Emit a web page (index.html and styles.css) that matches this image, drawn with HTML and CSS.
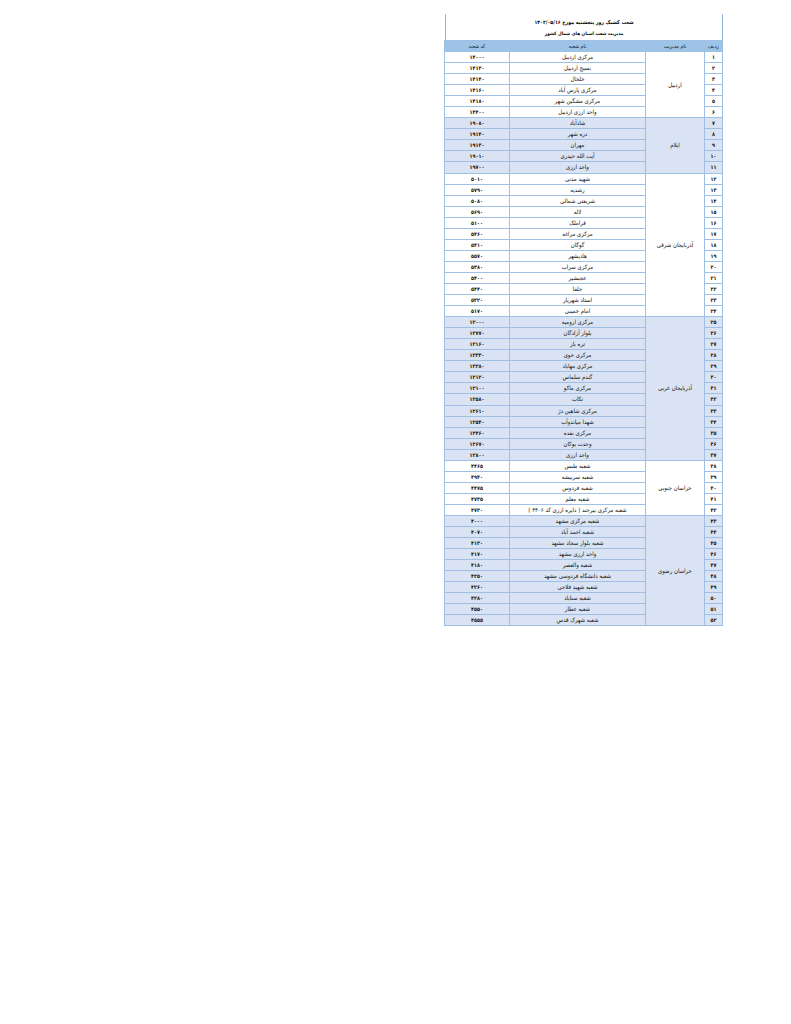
FILE: index.html
```html
<!DOCTYPE html>
<html lang="fa" dir="rtl">
<head>
<meta charset="utf-8">
<title>شعب کشیک</title>
<link rel="stylesheet" href="styles.css">
</head>
<body>
<div class="page">
  <div class="sheet">
    <div class="titles">
      <div class="title">شعب کشیک روز پنجشنبه مورخ ۱۴۰۲/۰۵/۱۶</div>
      <div class="subtitle">مدیریت شعب استان های شمال کشور</div>
    </div>
    <table class="grid">
      <colgroup>
        <col class="c-num"><col class="c-mgmt"><col class="c-name"><col class="c-code">
      </colgroup>
      <thead>
        <tr><th>ردیف</th><th>نام مدیریت</th><th>نام شعبه</th><th>کد شعبه</th></tr>
      </thead>
      <tbody class="g-white">
        <tr><td class="num">۱</td><td class="mgmt" rowspan="6">اردبیل</td><td>مرکزی اردبیل</td><td class="code">۱۴۰۰۰</td></tr>
        <tr><td class="num">۲</td><td>بسیج اردبیل</td><td class="code">۱۴۱۳۰</td></tr>
        <tr><td class="num">۳</td><td>خلخال</td><td class="code">۱۴۱۴۰</td></tr>
        <tr><td class="num">۴</td><td>مرکزی پارس آباد</td><td class="code">۱۴۱۶۰</td></tr>
        <tr><td class="num">۵</td><td>مرکزی مشگین شهر</td><td class="code">۱۴۱۸۰</td></tr>
        <tr><td class="num">۶</td><td>واحد ارزی اردبیل</td><td class="code">۱۴۴۰۰</td></tr>
      </tbody>
      <tbody class="g-band">
        <tr><td class="num">۷</td><td class="mgmt" rowspan="5">ایلام</td><td>شادآباد</td><td class="code">۱۹۰۸۰</td></tr>
        <tr><td class="num">۸</td><td>دره شهر</td><td class="code">۱۹۱۴۰</td></tr>
        <tr><td class="num">۹</td><td>مهران</td><td class="code">۱۹۱۳۰</td></tr>
        <tr><td class="num">۱۰</td><td>آیت الله حیدری</td><td class="code">۱۹۰۱۰</td></tr>
        <tr><td class="num">۱۱</td><td>واحد ارزی</td><td class="code">۱۹۷۰۰</td></tr>
      </tbody>
      <tbody class="g-white">
        <tr><td class="num">۱۲</td><td class="mgmt" rowspan="13">آذربایجان شرقی</td><td>شهید مدنی</td><td class="code">۵۰۱۰</td></tr>
        <tr><td class="num">۱۳</td><td>رشدیه</td><td class="code">۵۷۹۰</td></tr>
        <tr><td class="num">۱۴</td><td>شریعتی شمالی</td><td class="code">۵۰۸۰</td></tr>
        <tr><td class="num">۱۵</td><td>لاله</td><td class="code">۵۶۹۰</td></tr>
        <tr><td class="num">۱۶</td><td>قراملک</td><td class="code">۵۱۰۰</td></tr>
        <tr><td class="num">۱۷</td><td>مرکزی مراغه</td><td class="code">۵۴۶۰</td></tr>
        <tr><td class="num">۱۸</td><td>گوگان</td><td class="code">۵۴۱۰</td></tr>
        <tr><td class="num">۱۹</td><td>هادیشهر</td><td class="code">۵۵۷۰</td></tr>
        <tr><td class="num">۲۰</td><td>مرکزی سراب</td><td class="code">۵۳۸۰</td></tr>
        <tr><td class="num">۲۱</td><td>عجبشیر</td><td class="code">۵۴۰۰</td></tr>
        <tr><td class="num">۲۲</td><td>جلفا</td><td class="code">۵۴۴۰</td></tr>
        <tr><td class="num">۲۳</td><td>استاد شهریار</td><td class="code">۵۳۲۰</td></tr>
        <tr><td class="num">۲۴</td><td>امام خمینی</td><td class="code">۵۱۷۰</td></tr>
      </tbody>
      <tbody class="g-band">
        <tr><td class="num">۲۵</td><td class="mgmt" rowspan="13">آذربایجان غربی</td><td>مرکزی ارومیه</td><td class="code">۱۲۰۰۰</td></tr>
        <tr><td class="num">۲۶</td><td>بلوار آزادگان</td><td class="code">۱۲۷۷۰</td></tr>
        <tr><td class="num">۲۷</td><td>تره بار</td><td class="code">۱۲۱۶۰</td></tr>
        <tr><td class="num">۲۸</td><td>مرکزی خوی</td><td class="code">۱۲۳۳۰</td></tr>
        <tr><td class="num">۲۹</td><td>مرکزی مهاباد</td><td class="code">۱۲۲۸۰</td></tr>
        <tr><td class="num">۳۰</td><td>گندم سلماس</td><td class="code">۱۲۱۲۰</td></tr>
        <tr><td class="num">۳۱</td><td>مرکزی ماکو</td><td class="code">۱۲۱۰۰</td></tr>
        <tr><td class="num">۳۲</td><td>تکاب</td><td class="code">۱۲۵۸۰</td></tr>
        <tr><td class="num">۳۳</td><td>مرکزی شاهین دژ</td><td class="code">۱۲۶۱۰</td></tr>
        <tr><td class="num">۳۴</td><td>شهدا میاندوآب</td><td class="code">۱۲۵۴۰</td></tr>
        <tr><td class="num">۳۵</td><td>مرکزی نقده</td><td class="code">۱۲۴۶۰</td></tr>
        <tr><td class="num">۳۶</td><td>وحدت بوکان</td><td class="code">۱۲۶۷۰</td></tr>
        <tr><td class="num">۳۷</td><td>واحد ارزی</td><td class="code">۱۲۸۰۰</td></tr>
      </tbody>
      <tbody class="g-white">
        <tr><td class="num">۳۸</td><td class="mgmt" rowspan="5">خراسان جنوبی</td><td>شعبه طبس</td><td class="code">۴۴۶۵</td></tr>
        <tr><td class="num">۳۹</td><td>شعبه سربیشه</td><td class="code">۴۹۴۰</td></tr>
        <tr><td class="num">۴۰</td><td>شعبه فردوس</td><td class="code">۴۴۷۵</td></tr>
        <tr><td class="num">۴۱</td><td>شعبه معلم</td><td class="code">۴۷۳۵</td></tr>
        <tr><td class="num">۴۲</td><td>شعبه مرکزی بیرجند ( دایره ارزی کد ۴۴۰۶ )</td><td class="code">۴۷۲۰</td></tr>
      </tbody>
      <tbody class="g-band">
        <tr><td class="num">۴۳</td><td class="mgmt" rowspan="10">خراسان رضوی</td><td>شعبه مرکزی مشهد</td><td class="code">۴۰۰۰</td></tr>
        <tr><td class="num">۴۴</td><td>شعبه احمد آباد</td><td class="code">۴۰۷۰</td></tr>
        <tr><td class="num">۴۵</td><td>شعبه بلوار سجاد مشهد</td><td class="code">۴۱۳۰</td></tr>
        <tr><td class="num">۴۶</td><td>واحد ارزی مشهد</td><td class="code">۴۱۷۰</td></tr>
        <tr><td class="num">۴۷</td><td>شعبه والعصر</td><td class="code">۴۱۸۰</td></tr>
        <tr><td class="num">۴۸</td><td>شعبه دانشگاه فردوسی مشهد</td><td class="code">۴۲۵۰</td></tr>
        <tr><td class="num">۴۹</td><td>شعبه شهید فلاحی</td><td class="code">۴۲۶۰</td></tr>
        <tr><td class="num">۵۰</td><td>شعبه سناباد</td><td class="code">۴۲۸۰</td></tr>
        <tr><td class="num">۵۱</td><td>شعبه عطار</td><td class="code">۴۵۵۰</td></tr>
        <tr><td class="num">۵۲</td><td>شعبه شهرک قدس</td><td class="code">۴۵۵۵</td></tr>
      </tbody>
    </table>
  </div>
</div>
</body>
</html>
```

FILE: styles.css
```css
html, body {
  margin: 0;
  padding: 0;
  background: #ffffff;
}

body {
  font-family: "DejaVu Sans Condensed", "DejaVu Sans", sans-serif;
  font-stretch: condensed;
  color: #111;
}

.page {
  display: flex;
  justify-content: flex-start;
  padding: 14px 68px 0 0;
}

.sheet {
  width: 276px;
  border-right: 1px solid #8fb4dd;
  border-left: 1px solid #8fb4dd;
}

.titles {
  height: 26px;
  display: flex;
  flex-direction: column;
  align-items: center;
  justify-content: center;
  gap: 4px;
  font-weight: bold;
  color: #000;
}

.title {
  font-size: 5.2px;
  line-height: 8px;
}

.subtitle {
  font-size: 4.7px;
  line-height: 7px;
}

.grid {
  width: calc(100% + 2px);
  margin: 0 -1px;
  border-collapse: collapse;
  table-layout: fixed;
  font-size: 6px;
}

.c-num { width: 18px; }
.c-mgmt { width: 59px; }
.c-name { width: 136px; }
.c-code { width: 65px; }

.grid th,
.grid td {
  border: 1px solid #9fc0e4;
  padding: 0;
  text-align: center;
  vertical-align: middle;
  line-height: 8px;
  white-space: nowrap;
  overflow: hidden;
}

.grid thead tr {
  height: 11px;
}

.grid th {
  background: #9dc3e6;
  font-weight: normal;
  font-size: 5.4px;
  color: #222;
}

.grid tbody tr {
  height: 11.06px;
}

.g-band td {
  background: #dae3f3;
}

.g-white td {
  background: #ffffff;
}

.num {
  font-weight: bold;
  font-size: 5.4px;
}

.code {
  font-weight: bold;
  font-size: 5.4px;
}

.mgmt {
  font-size: 6px;
}
```
